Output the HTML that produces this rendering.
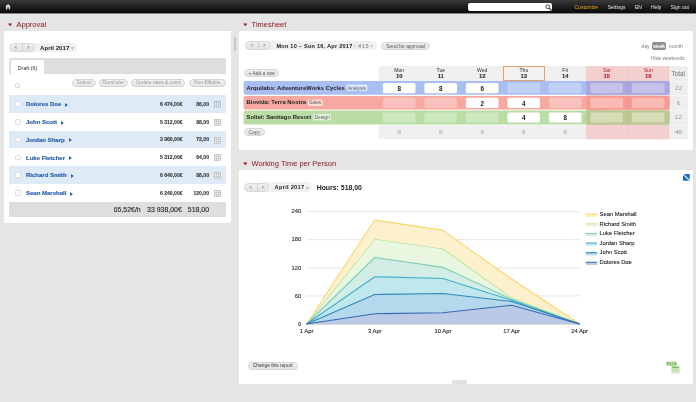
<!DOCTYPE html>
<html><head><meta charset="utf-8">
<style>
*{box-sizing:border-box;margin:0;padding:0}
html,body{width:696px;height:402px;overflow:hidden;background:#e5e5e5;font-family:"Liberation Sans",sans-serif;color:#222}
.a{position:absolute}
.t{position:absolute;white-space:nowrap;line-height:1}
#top{left:0;top:0;width:696px;height:13px;background:linear-gradient(#3a3a3a,#1a1a1a 60%,#0c0c0c)}
.panel{background:#fff}
.h{color:#8a1727;font-size:7.5px}
.btn{position:absolute;border:1px solid #d7d7d7;border-radius:5px;background:linear-gradient(#eeeeee,#e3e3e3);font-size:4.6px;color:#555;text-align:center;white-space:nowrap}
.tb{color:#9a9a9a;font-size:4.9px;border-color:#d2d2d2;background:linear-gradient(#f3f3f3,#e6e6e6)}
.row{position:absolute;left:9px;width:217px;height:17.7px}
.blue{background:#deebf7}
.nm{position:absolute;left:17px;top:6.1px;font-size:6px;font-weight:bold;color:#2a62ae;-webkit-text-stroke:0.18px #2a62ae;white-space:nowrap;line-height:1}
.v{position:absolute;font-size:5.1px;font-weight:bold;color:#333;-webkit-text-stroke:0.1px #333;top:6.8px;white-space:nowrap;line-height:1;text-align:right}
.cb{position:absolute;left:6.2px;top:6.3px;width:5.4px;height:5.4px;border:1px solid #dadada;border-radius:1.6px;background:#fff}
.grid{position:absolute;left:204.6px;top:5.9px;width:7px;height:7px}
.tsrow{position:absolute;left:243.5px;width:426.1px;height:13.5px}
.tsl{position:absolute;left:3px;top:4.5px;font-size:5.9px;font-weight:bold;color:#222;white-space:nowrap;line-height:1}
.tag{font-weight:normal;font-size:4.9px;margin-left:3.1px;color:#5c5c5c}
.cell{position:absolute;top:1.9px;width:32.6px;height:10.2px;font-size:6.3px;font-weight:bold;text-align:center;line-height:11px;color:#222}
.cw{background:#fff}
.dh{position:absolute;top:66.8px;width:41.5px;height:14.6px;text-align:center;font-size:5.1px;color:#2a2a2a;line-height:1}
.dh b{display:block;font-size:5.9px;margin-top:0.9px;-webkit-text-stroke:0.1px}
.tot{position:absolute;width:41.5px;text-align:center;font-size:6.2px;color:#999;line-height:1}
.ax{position:absolute;font-size:5.8px;color:#151515;-webkit-text-stroke:0.08px #151515;line-height:1;white-space:nowrap}
.lg{position:absolute;left:599.6px;font-size:5.8px;color:#151515;-webkit-text-stroke:0.08px #151515;line-height:1;white-space:nowrap}
</style></head><body><div id="root" style="position:absolute;left:0;top:0;width:696px;height:402px;will-change:transform;background:transparent">

<!-- TOP BAR -->
<div id="top" class="a"></div><div class="a" style="left:0;top:13px;width:696px;height:1px;background:rgba(0,0,0,.42)"></div>
<svg class="a" style="left:5.4px;top:4.2px" width="6.1" height="5.5" viewBox="0 0 7 6" preserveAspectRatio="none"><path d="M3.5 0 L6.6 2.8 L5.9 2.8 L5.9 6 L4.3 6 L4.3 3.8 L2.7 3.8 L2.7 6 L1.1 6 L1.1 2.8 L0.4 2.8 Z" fill="#d4d4d4"></path></svg>
<div class="a" style="left:468px;top:3px;width:84.3px;height:8.4px;background:#fff;border-radius:2px"></div>
<svg class="a" style="left:545.4px;top:4.2px" width="7" height="7" viewBox="0 0 7 7"><circle cx="2.7" cy="2.7" r="1.9" fill="none" stroke="#333" stroke-width="0.9"></circle><path d="M4.1 4.1 L6.2 6.2" stroke="#333" stroke-width="1.1"></path></svg>
<div class="t" style="left:574.5px;top:4.7px;font-size:5px;color:#f5a623">Customize</div>
<div class="t" style="left:601.5px;top:4.7px;font-size:5px;color:#777">·</div>
<div class="t" style="left:607.5px;top:4.7px;font-size:5px;color:#e5e5e5">Settings</div>
<div class="t" style="left:629.5px;top:4.7px;font-size:5px;color:#777">·</div>
<div class="t" style="left:635px;top:4.7px;font-size:5px;color:#e5e5e5">EN</div>
<div class="t" style="left:645.5px;top:4.7px;font-size:5px;color:#777">·</div>
<div class="t" style="left:651px;top:4.7px;font-size:5px;color:#e5e5e5">Help</div>
<div class="t" style="left:664.5px;top:4.7px;font-size:5px;color:#777">·</div>
<div class="t" style="left:670.5px;top:4.7px;font-size:5px;color:#e5e5e5">Sign out</div>

<!-- APPROVAL -->
<svg class="a" style="left:8.4px;top:23.1px" width="5" height="4" viewBox="0 0 5 4"><path d="M0 0.5 L4.2 0.5 L2.1 3.2 Z" fill="#9c1a2c"></path></svg>
<div class="t h" style="left:16.5px;top:21.2px">Approval</div>
<div class="a panel" style="left:4px;top:31px;width:227px;height:192.4px;border-radius:0 0 1.5px 1.5px"></div>

<div class="a" style="left:22px;top:43px;width:55.2px;height:9.2px;border-radius:4.6px;background:#f1f1f1"></div>
<div class="btn" style="left:8.8px;top:43.1px;width:26px;height:9px;border-radius:5px"></div>
<div class="a" style="left:21.6px;top:44px;width:1px;height:7.2px;background:#d2d2d2"></div>
<div class="t" style="left:14.2px;top:45.2px;font-size:5.2px;color:#8493ab;font-weight:bold">&lt;</div>
<div class="t" style="left:26.8px;top:45.2px;font-size:5.2px;color:#8493ab;font-weight:bold">&gt;</div>
<div class="t" style="left:40px;top:45px;font-size:6.1px;font-weight:bold;color:#222;letter-spacing:0.02px">April 2017</div>
<svg class="a" style="left:71.2px;top:47px" width="3" height="3" viewBox="0 0 3 3"><path d="M0 0.2H2.9L1.45 2.7Z" fill="#adadad"></path></svg>

<div class="a" style="left:9px;top:58.3px;width:217px;height:15.3px;background:#dedede;border-radius:2px 2px 0 0"></div>
<div class="a" style="left:11px;top:60.2px;width:32.6px;height:13.6px;background:#fff;border-radius:2px 2px 0 0"></div>
<div class="t" style="left:17.8px;top:66px;font-size:5.3px;color:#2e2e2e">Draft (6)</div>

<div class="a" style="left:15px;top:82.8px;width:5.4px;height:5.4px;border:1px solid #d4d4d4;border-radius:1.6px;background:#fff"></div>
<div class="btn tb" style="left:72px;top:79.3px;width:24.4px;height:8px;line-height:6.9px">Submit</div>
<div class="btn tb" style="left:98.8px;top:79.3px;width:29.6px;height:8px;line-height:6.9px">Reminder</div>
<div class="btn tb" style="left:131.2px;top:79.3px;width:54.3px;height:8px;line-height:6.9px">Update rates &amp; costs</div>
<div class="btn tb" style="left:188.5px;top:79.3px;width:37.4px;height:8px;line-height:6.9px">Non-Billable</div>

<div id="rows"><div class="row blue" style="top:95.2px"><div class="cb"></div><div class="nm">Dolores Doe<svg width="2.9" height="4" viewBox="0 0 2.7 3.7" style="margin-left:4px;vertical-align:-0.65px"><path d="M0 0L2.7 1.85L0 3.7Z" fill="#2a62ae"></path></svg></div><div class="v" style="right:43.4px">6 474,00€</div><div class="v" style="right:17px">86,00</div><svg class="grid" style="top:5.5px;height:7.4px" viewBox="0 0 7 7.4"><rect x="0.3" y="0.3" width="6.4" height="6.8" fill="none" stroke="#9aa3ae" stroke-width="0.55"></rect><path d="M2.4 0.3V7.1M4.6 0.3V7.1" stroke="#9aa3ae" stroke-width="0.55"></path></svg></div><div class="row " style="top:112.95px"><div class="cb"></div><div class="nm">John Scott<svg width="2.9" height="4" viewBox="0 0 2.7 3.7" style="margin-left:4px;vertical-align:-0.65px"><path d="M0 0L2.7 1.85L0 3.7Z" fill="#2a62ae"></path></svg></div><div class="v" style="right:43.4px">5 312,00€</div><div class="v" style="right:17px">88,00</div><svg class="grid" viewBox="0 0 7 7"><rect x="0.3" y="0.3" width="6.4" height="6.4" fill="#f6f6f6" stroke="#a6a6a6" stroke-width="0.5"></rect><path d="M2.4 0.3V6.7M4.6 0.3V6.7M0.3 2.4H6.7M0.3 4.6H6.7" stroke="#a8a8a8" stroke-width="0.5"></path></svg></div><div class="row blue" style="top:130.7px"><div class="cb"></div><div class="nm">Jordan Sharp<svg width="2.9" height="4" viewBox="0 0 2.7 3.7" style="margin-left:4px;vertical-align:-0.65px"><path d="M0 0L2.7 1.85L0 3.7Z" fill="#2a62ae"></path></svg></div><div class="v" style="right:43.4px">3 960,00€</div><div class="v" style="right:17px">72,00</div><svg class="grid" viewBox="0 0 7 7"><rect x="0.3" y="0.3" width="6.4" height="6.4" fill="#f6f6f6" stroke="#a6a6a6" stroke-width="0.5"></rect><path d="M2.4 0.3V6.7M4.6 0.3V6.7M0.3 2.4H6.7M0.3 4.6H6.7" stroke="#a8a8a8" stroke-width="0.5"></path></svg></div><div class="row " style="top:148.45px"><div class="cb"></div><div class="nm">Luke Fletcher<svg width="2.9" height="4" viewBox="0 0 2.7 3.7" style="margin-left:4px;vertical-align:-0.65px"><path d="M0 0L2.7 1.85L0 3.7Z" fill="#2a62ae"></path></svg></div><div class="v" style="right:43.4px">5 312,00€</div><div class="v" style="right:17px">64,00</div><svg class="grid" viewBox="0 0 7 7"><rect x="0.3" y="0.3" width="6.4" height="6.4" fill="#f6f6f6" stroke="#a6a6a6" stroke-width="0.5"></rect><path d="M2.4 0.3V6.7M4.6 0.3V6.7M0.3 2.4H6.7M0.3 4.6H6.7" stroke="#a8a8a8" stroke-width="0.5"></path></svg></div><div class="row blue" style="top:166.2px"><div class="cb"></div><div class="nm">Richard Smith<svg width="2.9" height="4" viewBox="0 0 2.7 3.7" style="margin-left:4px;vertical-align:-0.65px"><path d="M0 0L2.7 1.85L0 3.7Z" fill="#2a62ae"></path></svg></div><div class="v" style="right:43.4px">6 640,00€</div><div class="v" style="right:17px">88,00</div><svg class="grid" viewBox="0 0 7 7"><rect x="0.3" y="0.3" width="6.4" height="6.4" fill="#f6f6f6" stroke="#a6a6a6" stroke-width="0.5"></rect><path d="M2.4 0.3V6.7M4.6 0.3V6.7M0.3 2.4H6.7M0.3 4.6H6.7" stroke="#a8a8a8" stroke-width="0.5"></path></svg></div><div class="row " style="top:183.95px"><div class="cb"></div><div class="nm">Sean Marshall<svg width="2.9" height="4" viewBox="0 0 2.7 3.7" style="margin-left:4px;vertical-align:-0.65px"><path d="M0 0L2.7 1.85L0 3.7Z" fill="#2a62ae"></path></svg></div><div class="v" style="right:43.4px">6 240,00€</div><div class="v" style="right:17px">120,00</div><svg class="grid" viewBox="0 0 7 7"><rect x="0.3" y="0.3" width="6.4" height="6.4" fill="#f6f6f6" stroke="#a6a6a6" stroke-width="0.5"></rect><path d="M2.4 0.3V6.7M4.6 0.3V6.7M0.3 2.4H6.7M0.3 4.6H6.7" stroke="#a8a8a8" stroke-width="0.5"></path></svg></div></div>

<div class="a" style="left:9px;top:202px;width:217px;height:15.3px;background:#dedede"></div>
<div class="t" style="left:113.7px;top:207.1px;font-size:6.95px;color:#2a2a2a;-webkit-text-stroke:0.12px #2a2a2a">65,52€/h</div>
<div class="t" style="left:147.1px;top:207.1px;font-size:6.95px;color:#2a2a2a;-webkit-text-stroke:0.12px #2a2a2a">33 938,00€</div>
<div class="t" style="left:187.8px;top:207.1px;font-size:6.95px;color:#2a2a2a;-webkit-text-stroke:0.12px #2a2a2a">518,00</div>

<!-- resizer -->
<div class="a" style="left:234.2px;top:37px;width:2px;height:14px;background:#c4c4c4;border-radius:1px"></div>

<!-- TIMESHEET -->
<svg class="a" style="left:243.3px;top:23px" width="5" height="4" viewBox="0 0 5 4"><path d="M0 0.5 L4.5 0.5 L2.25 3.3 Z" fill="#9c1a2c"></path></svg>
<div class="t h" style="left:251.6px;top:21.2px">Timesheet</div>
<div class="a panel" style="left:238.6px;top:31px;width:454.6px;height:119.4px"></div>

<div class="a" style="left:260px;top:40.6px;width:116.8px;height:9.3px;border-radius:4.6px;background:#f1f1f1"></div>
<div class="btn" style="left:245.3px;top:40.8px;width:25.4px;height:9px"></div>
<div class="a" style="left:258px;top:41.6px;width:1px;height:7.6px;background:#d2d2d2"></div>
<div class="t" style="left:250.6px;top:42.9px;font-size:5.2px;color:#8493ab;font-weight:bold">&lt;</div>
<div class="t" style="left:262.9px;top:42.9px;font-size:5.2px;color:#8493ab;font-weight:bold">&gt;</div>
<div class="t" style="left:276.4px;top:43.6px;font-size:5.6px;font-weight:bold;color:#222;letter-spacing:0.23px">Mon 10 – Sun 16, Apr 2017 <span style="color:#aaa;font-weight:normal">|</span> <span style="color:#777;font-weight:normal;letter-spacing:0.5px;margin-left:0.4px">#15</span></div>
<svg class="a" style="left:370.4px;top:44.6px" width="3" height="3" viewBox="0 0 3 3"><path d="M0 0.2H2.6L1.3 2.6Z" fill="#b5b5b5"></path></svg>
<div class="btn" style="left:381.4px;top:41.5px;width:48.4px;height:8.4px;line-height:7.3px;font-size:4.9px;color:#555">Send for approval</div>

<div class="t" style="left:641.3px;top:43.9px;font-size:5.2px;color:#808080">day</div>
<div class="a" style="left:652px;top:41.8px;width:14.4px;height:8.3px;border-radius:2px;background:#8e8e8e"></div>
<div class="t" style="left:653.3px;top:44.5px;font-size:4.8px;color:#fff;font-weight:bold">week</div>
<div class="t" style="left:669px;top:43.9px;font-size:5px;color:#808080">month</div>
<div class="t" style="left:651px;top:56.8px;font-size:4.95px;color:#808080">Hide weekends</div>

<!-- header bg -->
<svg class="a" style="left:0;top:0" width="696" height="160" viewBox="0 0 696 160">
<defs><pattern id="hx" width="2.6" height="2.6" patternUnits="userSpaceOnUse"><path d="M0 0.3H2.6M0.3 0V2.6" stroke="#e9b4b4" stroke-width="0.45" opacity="0.3"></path></pattern></defs>
<path d="M380.3 66.1H586V81.2H378.6V67.8Q378.6 66.1 380.3 66.1Z" fill="#f0f0f0"></path>
<path d="M378.6 125.3H586V139.3H380.3Q378.6 139.3 378.6 137.6Z" fill="#f0f0f0"></path>
<rect x="586" y="66.1" width="83.7" height="73.2" fill="#f4d2d2"></rect><rect x="586" y="66.1" width="83.7" height="73.2" fill="url(#hx)"></rect>
<path d="M670.3 66.1H686Q687.8 66.1 687.8 67.9V137.5Q687.8 139.3 686 139.3H670.3Z" fill="#eeeeee"></path>
</svg>
<div class="dh" style="left:378.5px;padding-top:1.1px">Mon<b>10</b></div>
<div class="dh" style="left:420px;padding-top:1.1px">Tue<b>11</b></div>
<div class="dh" style="left:461.5px;padding-top:1.1px">Wed<b>12</b></div>
<div class="dh" style="left:503.2px;padding-top:1.1px;top:66.2px;border:1px solid #dfa16c;background:#f1f1f1;width:41.4px">
<div style="margin-top:-0.1px">Thu<b>13</b></div></div>
<div class="dh" style="left:544.5px;padding-top:1.1px">Fri<b>14</b></div>
<div class="dh" style="left:586px;padding-top:1.1px;color:#b01f28">Sat<b>15</b></div>
<div class="dh" style="left:627.5px;padding-top:1.1px;color:#b01f28">Sun<b>16</b></div>
<div class="t" style="left:671.4px;top:70.9px;font-size:6.4px;color:#707070">Total</div>

<div class="btn" style="left:243.8px;top:68.9px;width:35.6px;height:8.3px;line-height:7.2px;font-size:4.9px;color:#555">+ Add a row</div>

<!-- totals row bg -->



<div id="ts"><svg id="tssvg" class="a" style="left:0;top:0" width="696" height="160" viewBox="0 0 696 160"><rect x="243.6" y="81.1" width="426" height="13.7" rx="1.8" fill="#a9bff3"></rect><rect x="586" y="81.1" width="83.6" height="13.7" rx="1.8" fill="#aaa6e0"></rect><rect x="586" y="81.1" width="20" height="13.7" fill="#aaa6e0"></rect><rect x="382.9" y="83" width="32.6" height="10.2" rx="1.8" fill="#fff"></rect><rect x="424.4" y="83" width="32.6" height="10.2" rx="1.8" fill="#fff"></rect><rect x="465.9" y="83" width="32.6" height="10.2" rx="1.8" fill="#fff"></rect><rect x="507.4" y="83" width="32.6" height="10.2" rx="1.8" fill="#c1d0f6"></rect><rect x="548.9" y="83" width="32.6" height="10.2" rx="1.8" fill="#c1d0f6"></rect><rect x="590.4" y="83" width="32.6" height="10.2" rx="1.8" fill="#c5c2ea"></rect><rect x="631.9" y="83" width="32.6" height="10.2" rx="1.8" fill="#c5c2ea"></rect><rect x="243.6" y="95.9" width="426" height="13.7" rx="1.8" fill="#f7a8a0"></rect><rect x="586" y="95.9" width="83.6" height="13.7" rx="1.8" fill="#f79a93"></rect><rect x="586" y="95.9" width="20" height="13.7" fill="#f79a93"></rect><rect x="382.9" y="97.80000000000001" width="32.6" height="10.2" rx="1.8" fill="#f9c1bb"></rect><rect x="424.4" y="97.80000000000001" width="32.6" height="10.2" rx="1.8" fill="#f9c1bb"></rect><rect x="465.9" y="97.80000000000001" width="32.6" height="10.2" rx="1.8" fill="#fff"></rect><rect x="507.4" y="97.80000000000001" width="32.6" height="10.2" rx="1.8" fill="#fff"></rect><rect x="548.9" y="97.80000000000001" width="32.6" height="10.2" rx="1.8" fill="#f9c1bb"></rect><rect x="590.4" y="97.80000000000001" width="32.6" height="10.2" rx="1.8" fill="#fbbbb5"></rect><rect x="631.9" y="97.80000000000001" width="32.6" height="10.2" rx="1.8" fill="#fbbbb5"></rect><rect x="243.6" y="110.5" width="426" height="13.9" rx="1.8" fill="#b9dda4"></rect><rect x="586" y="110.5" width="83.6" height="13.9" rx="1.8" fill="#bec691"></rect><rect x="586" y="110.5" width="20" height="13.9" fill="#bec691"></rect><rect x="382.9" y="112.4" width="32.6" height="10.2" rx="1.8" fill="#cee8bf"></rect><rect x="424.4" y="112.4" width="32.6" height="10.2" rx="1.8" fill="#cee8bf"></rect><rect x="465.9" y="112.4" width="32.6" height="10.2" rx="1.8" fill="#cee8bf"></rect><rect x="507.4" y="112.4" width="32.6" height="10.2" rx="1.8" fill="#fff"></rect><rect x="548.9" y="112.4" width="32.6" height="10.2" rx="1.8" fill="#fff"></rect><rect x="590.4" y="112.4" width="32.6" height="10.2" rx="1.8" fill="#d7dcb6"></rect><rect x="631.9" y="112.4" width="32.6" height="10.2" rx="1.8" fill="#d7dcb6"></rect><rect x="346.51" y="84.6" width="20.82" height="6.5" rx="1.4" fill="rgba(255,255,255,.62)"></rect><rect x="307.76" y="99.4" width="14.83" height="6.5" rx="1.4" fill="rgba(255,255,255,.62)"></rect><rect x="313.11" y="114" width="17.83" height="6.5" rx="1.4" fill="rgba(255,255,255,.62)"></rect></svg><div class="tsrow" style="top:81.1px"><div class="tsl">Arquilabs: AdventureWorks Cycles<span class="tag">Analysis</span></div><div class="cell" style="left:139.39999999999998px">8</div><div class="cell" style="left:180.89999999999998px">8</div><div class="cell" style="left:222.39999999999998px">6</div><div class="cell" style="left:263.9px"></div><div class="cell" style="left:305.4px"></div><div class="cell" style="left:346.9px"></div><div class="cell" style="left:388.4px"></div></div><div class="tot" style="left:657.8px;top:85px;color:#999">22</div><div class="tsrow" style="top:95.9px"><div class="tsl">Biovida: Terra Nostra<span class="tag">Sales</span></div><div class="cell" style="left:139.39999999999998px"></div><div class="cell" style="left:180.89999999999998px"></div><div class="cell" style="left:222.39999999999998px">2</div><div class="cell" style="left:263.9px">4</div><div class="cell" style="left:305.4px"></div><div class="cell" style="left:346.9px"></div><div class="cell" style="left:388.4px"></div></div><div class="tot" style="left:657.8px;top:99.80000000000001px;color:#999">6</div><div class="tsrow" style="top:110.5px"><div class="tsl">Soltel: Santiago Resort<span class="tag">Design</span></div><div class="cell" style="left:139.39999999999998px"></div><div class="cell" style="left:180.89999999999998px"></div><div class="cell" style="left:222.39999999999998px"></div><div class="cell" style="left:263.9px">4</div><div class="cell" style="left:305.4px">8</div><div class="cell" style="left:346.9px"></div><div class="cell" style="left:388.4px"></div></div><div class="tot" style="left:657.8px;top:114.4px;color:#999">12</div><div class="tot" style="left:378.5px;top:128.9px;color:#a6a6a6">8</div><div class="tot" style="left:420px;top:128.9px;color:#a6a6a6">8</div><div class="tot" style="left:461.5px;top:128.9px;color:#a6a6a6">8</div><div class="tot" style="left:503px;top:128.9px;color:#a6a6a6">8</div><div class="tot" style="left:544.5px;top:128.9px;color:#a6a6a6">8</div><div class="tot" style="left:586px;top:128.9px;color:#a6a6a6"></div><div class="tot" style="left:627.5px;top:128.9px;color:#a6a6a6"></div><div class="tot" style="left:657.8px;top:129.2px;color:#888">40</div></div>
<div class="a" style="left:627.2px;top:66px;width:0.5px;height:73.2px;background:rgba(215,90,90,.09)"></div>
<div class="a" style="left:670.2px;top:80.9px;width:17.6px;height:0.5px;background:#f5f5f5"></div><div class="a" style="left:670.2px;top:95.2px;width:17.6px;height:0.5px;background:#f5f5f5"></div><div class="a" style="left:670.2px;top:109.9px;width:17.6px;height:0.5px;background:#f5f5f5"></div><div class="a" style="left:670.2px;top:124.8px;width:17.6px;height:0.5px;background:#f5f5f5"></div>

<div class="btn" style="left:243.6px;top:127.7px;width:21.3px;height:8.8px;line-height:7.4px;font-size:4.9px;color:#606060">Copy</div>

<!-- WORKING TIME -->
<svg class="a" style="left:243.3px;top:162.4px" width="5" height="4" viewBox="0 0 5 4"><path d="M0 0.5 L4.5 0.5 L2.25 3.3 Z" fill="#9c1a2c"></path></svg>
<div class="t h" style="left:251.6px;top:160.2px">Working Time per Person</div>
<div class="a panel" style="left:238.6px;top:170.3px;width:454.6px;height:213.3px"></div>

<div class="a" style="left:258px;top:182.4px;width:53.8px;height:9.2px;border-radius:4.6px;background:#f1f1f1"></div>
<div class="btn" style="left:243.8px;top:182.5px;width:25.3px;height:9px"></div>
<div class="a" style="left:256.6px;top:183.6px;width:1px;height:7px;background:#d2d2d2"></div>
<div class="t" style="left:249.2px;top:185.5px;font-size:4.6px;color:#8493ab;font-weight:bold">&lt;</div>
<div class="t" style="left:261.8px;top:185.5px;font-size:4.6px;color:#8493ab;font-weight:bold">&gt;</div>
<div class="t" style="left:274.6px;top:185.2px;font-size:5.7px;font-weight:bold;color:#222;letter-spacing:0.26px">April 2017</div>
<svg class="a" style="left:306px;top:186.6px" width="3" height="3" viewBox="0 0 3 3"><path d="M0 0.2H2.9L1.45 2.7Z" fill="#adadad"></path></svg>
<div class="t" style="left:316.7px;top:185.1px;font-size:6.9px;font-weight:bold;color:#222">Hours: 518,00</div>

<svg class="a" style="left:0;top:0" width="696" height="402" viewBox="0 0 696 402" id="chart"><path d="M306.4 324H580" stroke="#b8b8b8" stroke-width="1"></path><path d="M306.4 295.9H580" stroke="#dcdcdc" stroke-width="0.7"></path><path d="M306.4 267.8H580" stroke="#dcdcdc" stroke-width="0.7"></path><path d="M306.4 239.7H580" stroke="#dcdcdc" stroke-width="0.7"></path><path d="M306.4 211.6H580" stroke="#dcdcdc" stroke-width="0.7"></path><path d="M306.6 324L374.8 220.02999999999997L443 230.33333333333331L511.6 279.03999999999996L579.6 324L579.6 324L306.6 324Z" fill="#fdf1cd"></path><path d="M306.6 324L374.8 239.23166666666665L443 249.06666666666666L511.6 297.7733333333333L579.6 324L579.6 324L306.6 324Z" fill="#e9f6e0"></path><path d="M306.6 324L374.8 257.49666666666667L443 267.33166666666665L511.6 299.17833333333334L579.6 324L579.6 324L306.6 324Z" fill="#d2ede6"></path><path d="M306.6 324L374.8 276.6983333333333L443 278.57166666666666L511.6 300.3491666666667L579.6 324L579.6 324L306.6 324Z" fill="#c0e7ed"></path><path d="M306.6 324L374.8 294.495L443 293.55833333333334L511.6 301.52L579.6 324L579.6 324L306.6 324Z" fill="#b4d9ec"></path><path d="M306.6 324L374.8 313.69666666666666L443 312.76L511.6 305.26666666666665L579.6 324L579.6 324L306.6 324Z" fill="#b9c9e6"></path><path d="M306.6 324L374.8 220.02999999999997L443 230.33333333333331L511.6 279.03999999999996L579.6 324" fill="none" stroke="#fbd56b" stroke-width="1.1" stroke-linejoin="round"></path><path d="M306.6 324L374.8 239.23166666666665L443 249.06666666666666L511.6 297.7733333333333L579.6 324" fill="none" stroke="#c3e6ad" stroke-width="1.1" stroke-linejoin="round"></path><path d="M306.6 324L374.8 257.49666666666667L443 267.33166666666665L511.6 299.17833333333334L579.6 324" fill="none" stroke="#7fcdb9" stroke-width="1.1" stroke-linejoin="round"></path><path d="M306.6 324L374.8 276.6983333333333L443 278.57166666666666L511.6 300.3491666666667L579.6 324" fill="none" stroke="#3fb0c7" stroke-width="1.1" stroke-linejoin="round"></path><path d="M306.6 324L374.8 294.495L443 293.55833333333334L511.6 301.52L579.6 324" fill="none" stroke="#2f86c0" stroke-width="1.1" stroke-linejoin="round"></path><path d="M306.6 324L374.8 313.69666666666666L443 312.76L511.6 305.26666666666665L579.6 324" fill="none" stroke="#3b66b5" stroke-width="1.1" stroke-linejoin="round"></path><rect x="585.8" y="213.8" width="11.4" height="3.1" fill="#fdf1cd"></rect><path d="M585.8 214.20000000000002H597.2" stroke="#fbd56b" stroke-width="1"></path><rect x="585.8" y="223.42000000000002" width="11.4" height="3.1" fill="#e9f6e0"></rect><path d="M585.8 223.82000000000002H597.2" stroke="#c3e6ad" stroke-width="1"></path><rect x="585.8" y="233.04000000000002" width="11.4" height="3.1" fill="#d2ede6"></rect><path d="M585.8 233.44000000000003H597.2" stroke="#7fcdb9" stroke-width="1"></path><rect x="585.8" y="242.66" width="11.4" height="3.1" fill="#c0e7ed"></rect><path d="M585.8 243.06H597.2" stroke="#3fb0c7" stroke-width="1"></path><rect x="585.8" y="252.28" width="11.4" height="3.1" fill="#b4d9ec"></rect><path d="M585.8 252.68H597.2" stroke="#2f86c0" stroke-width="1"></path><rect x="585.8" y="261.9" width="11.4" height="3.1" fill="#b9c9e6"></rect><path d="M585.8 262.3H597.2" stroke="#3b66b5" stroke-width="1"></path></svg>

<div class="btn" style="left:248px;top:362px;width:49.6px;height:8px;line-height:6.9px;font-size:4.85px;color:#333">Change this report</div>

<!-- bottom handle -->
<div class="a" style="left:452px;top:380.4px;width:15.4px;height:3.6px;background:#e2e2e2"></div>

<!-- fullscreen icon -->
<svg class="a" style="left:682.7px;top:173.8px" width="7" height="7" viewBox="0 0 7 7"><rect x="0" y="0" width="6.7" height="6.7" rx="0.5" fill="#2368c0"></rect><path d="M0.2 0.2 L6.4 6.4" stroke="#fff" stroke-width="1.1"></path></svg>
<!-- csv icon -->
<svg class="a" style="left:666px;top:361px" width="14" height="13" viewBox="0 0 14 13"><path d="M5.6 3.4 L11.8 3.4 L13.4 5 L13.4 12.4 L5.6 12.4 Z" fill="#fafafa" stroke="#c9c9c9" stroke-width="0.4"></path><rect x="5.9" y="5.6" width="7.1" height="5.8" fill="#c9e3ae"></rect><rect x="5.9" y="5.6" width="7.1" height="1.3" fill="#7db851"></rect><rect x="0.8" y="0.7" width="9.5" height="3.9" rx="0.6" fill="#74b244"></rect><text x="1.7" y="3.9" font-size="3.7" font-weight="bold" fill="#e9f4df" font-family="Liberation Sans">CSV</text></svg>

<div><div class="ax" style="left:291px;top:209.29999999999998px;width:14px;text-align:right;left:287.2px">240</div><div class="ax" style="left:291px;top:237.39999999999998px;width:14px;text-align:right;left:287.2px">180</div><div class="ax" style="left:291px;top:265.5px;width:14px;text-align:right;left:287.2px">120</div><div class="ax" style="left:294px;top:293.59999999999997px;width:14px;text-align:right;left:287.2px">60</div><div class="ax" style="left:297px;top:321.7px;width:14px;text-align:right;left:287.2px">0</div><div class="ax" style="left:286.6px;width:40px;text-align:center;top:329.3px">1 Apr</div><div class="ax" style="left:354.8px;width:40px;text-align:center;top:329.3px">3 Apr</div><div class="ax" style="left:423px;width:40px;text-align:center;top:329.3px">10 Apr</div><div class="ax" style="left:491.6px;width:40px;text-align:center;top:329.3px">17 Apr</div><div class="ax" style="left:559.6px;width:40px;text-align:center;top:329.3px">24 Apr</div><div class="lg" style="top:211.9px">Sean Marshall</div><div class="lg" style="top:221.52px">Richard Smith</div><div class="lg" style="top:231.14000000000001px">Luke Fletcher</div><div class="lg" style="top:240.76px">Jordan Sharp</div><div class="lg" style="top:250.38px">John Scott</div><div class="lg" style="top:260px">Dolores Doe</div></div></div>


</body></html>
